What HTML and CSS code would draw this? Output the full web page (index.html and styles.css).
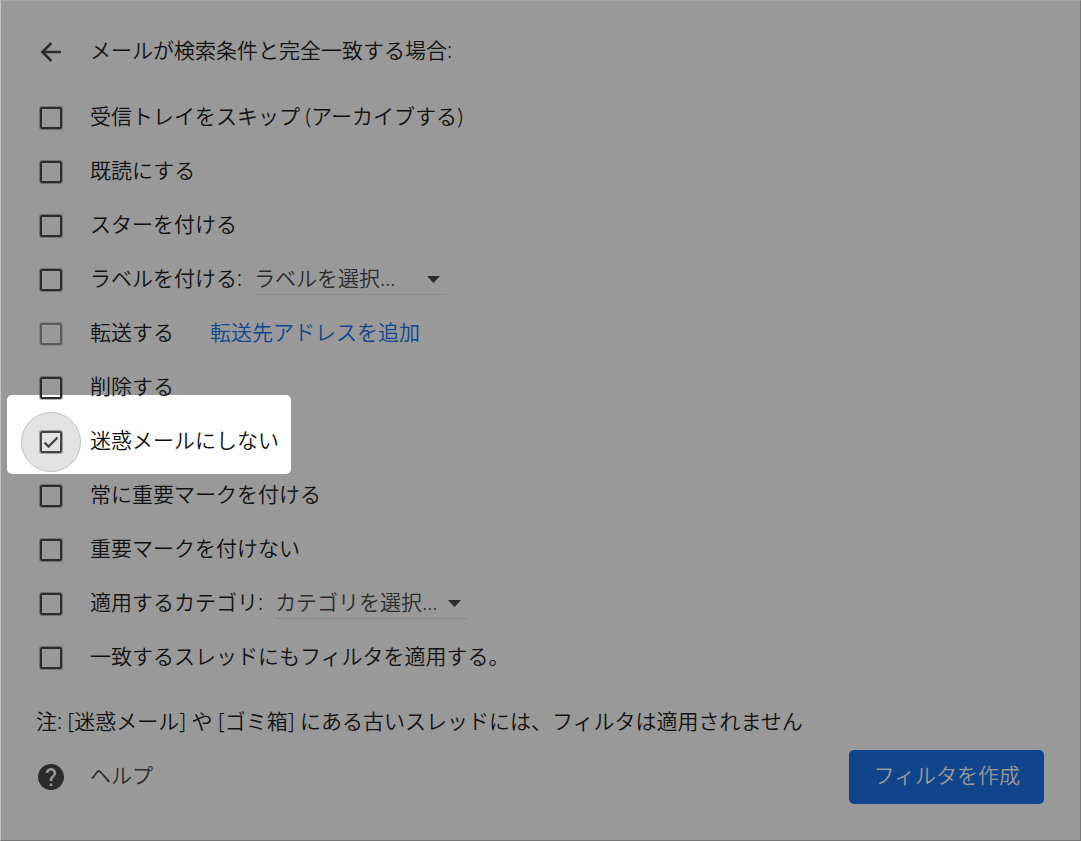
FILE: index.html
```
<!DOCTYPE html>
<html lang="ja">
<head>
  <meta charset="UTF-8" />
  <meta name="viewport" content="width=device-width, initial-scale=1.0"/>
  <title>フィルタを作成</title>
  <link rel="stylesheet" href="styles.css">
</head>
<body>

  <form class="panel">
    <header class="row header">
      <button type="button" class="back" aria-label="戻る">
        <svg viewBox="0 0 24 24" width="24" height="24" fill="none" stroke="currentColor" stroke-width="2.5">
          <path d="M22 12H4M12.4 3L3.400 12l9 9"/>
        </svg>
      </button>
      <span class="text">メールが検索条件と完全一致する場合:</span>
    </header>

    <div class="options">
      <div class="row">
        <span class="box"><input type="checkbox" id="skip"></span>
        <label class="text" for="skip">受信トレイをスキップ (アーカイブする)</label>
      </div>
      <div class="row">
        <span class="box"><input type="checkbox" id="read"></span>
        <label class="text" for="read">既読にする</label>
      </div>
      <div class="row">
        <span class="box"><input type="checkbox" id="star"></span>
        <label class="text" for="star">スターを付ける</label>
      </div>
      <div class="row">
        <span class="box"><input type="checkbox" id="label"></span>
        <label class="text" for="label">ラベルを付ける:</label>
        <span class="dropdown">
          <select aria-label="ラベルを選択">
            <option>ラベルを選択...</option>
          </select>
          <svg class="arrow" viewBox="0 0 13 7" width="13" height="7"><path d="M0 0h13L6.500 7z" fill="currentColor"/></svg>
        </span>
      </div>
      <div class="row">
        <span class="box"><input type="checkbox" id="forward" disabled></span>
        <label class="text" for="forward">転送する</label>
        <a href="#" class="text link">転送先アドレスを追加</a>
      </div>
      <div class="row">
        <span class="box"><input type="checkbox" id="delete"></span>
        <label class="text" for="delete">削除する</label>
      </div>
      <div class="row highlight">
        <span class="box focused"><input type="checkbox" id="spam" checked><svg class="tick" viewBox="0 0 18 18" width="18" height="18" fill="none" stroke="currentColor" stroke-width="2.3"><path d="M2.500 9.500l4 4 9-9"/></svg></span>
        <label class="text" for="spam">迷惑メールにしない</label>
      </div>
      <div class="row">
        <span class="box"><input type="checkbox" id="important"></span>
        <label class="text" for="important">常に重要マークを付ける</label>
      </div>
      <div class="row">
        <span class="box"><input type="checkbox" id="unimportant"></span>
        <label class="text" for="unimportant">重要マークを付けない</label>
      </div>
      <div class="row">
        <span class="box"><input type="checkbox" id="category"></span>
        <label class="text" for="category">適用するカテゴリ:</label>
        <span class="dropdown">
          <select aria-label="カテゴリを選択">
            <option>カテゴリを選択...</option>
          </select>
          <svg class="arrow" viewBox="0 0 13 7" width="13" height="7"><path d="M0 0h13L6.500 7z" fill="currentColor"/></svg>
        </span>
      </div>
      <div class="row">
        <span class="box"><input type="checkbox" id="threads"></span>
        <label class="text" for="threads">一致するスレッドにもフィルタを適用する。</label>
      </div>
    </div>

    <p class="note">注: [迷惑メール] や [ゴミ箱] にある古いスレッドには、フィルタは適用されません</p>

    <footer class="footer">
      <a href="#" class="row help">
        <span class="box">
          <svg viewBox="2 2 20 20" width="26" height="26" fill="currentColor">
            <path d="M12 2C6.480 2 2 6.480 2 12s4.480 10 10 10 10-4.480 10-10S17.520 2 12 2zm1 17h-2v-2h2v2zm2.070-7.750l-.9.920C13.450 12.900 13 13.500 13 15h-2v-.5c0-1.100.450-2.100 1.170-2.830l1.240-1.260c.370-.360.590-.860.590-1.410 0-1.100-.9-2-2-2s-2 .9-2 2H8c0-2.210 1.790-4 4-4s4 1.790 4 4c0 .880-.360 1.680-.930 2.250z"/>
          </svg>
        </span>
        <span class="text">ヘルプ</span>
      </a>
      <button type="submit" class="create">フィルタを作成</button>
    </footer>
  </form>

</body>
</html>
```
FILE: styles.css
```
* {
  box-sizing: border-box;
}

body {
  margin: 0;
  font-family: "Noto Sans", "Noto Sans CJK JP", sans-serif;
  font-size: 21px;
  font-weight: 350;
  color: #111;
  background-color: #999;
}

button,
select {
  font: inherit;
}

.panel {
  position: relative;
  z-index: 0;
  min-height: 100vh;
  padding: 24px 36px 36px 20px;
  border: 1px solid #777;
  border-top-color: #a6a6a6;
  border-left-color: #c4c4c4;
}

.row {
  display: flex;
  align-items: center;
  height: 54px;
  line-height: 32px;
  white-space: nowrap;
}

.text {
  padding-bottom: 4px;
}

.header {
  margin-bottom: 12px;
}

.back,
.box {
  flex: none;
  display: grid;
  place-items: center;
  width: 60px;
  height: 60px;
  margin-right: 9px;
  color: #2c2c2c;
}

.back {
  padding: 0;
  border: none;
  background: none;
  cursor: pointer;
}

.box > * {
  grid-area: 1 / 1;
}

.box input {
  appearance: none;
  width: 22px;
  height: 22px;
  margin: 0;
  border: 2px solid #2c2c2c;
  border-radius: 2px;
  box-shadow: 0 0 0 1px rgba(44, 44, 44, 0.35);
}

.box input:disabled {
  border-color: #5c5c5c;
  box-shadow: 0 0 0 1px rgba(44, 44, 44, 0.2);
}

/* active option: white card behind the row, round halo behind the box */
.highlight {
  position: relative;
}

.highlight::before {
  content: "";
  position: absolute;
  z-index: -1;
  top: -20px;
  left: -14px;
  width: 284px;
  height: 79px;
  border-radius: 5px;
  background: #fff;
}

.focused {
  border: 1px solid #bdc1c6;
  border-radius: 50%;
  background: #e3e3e3;
}

.box.focused input {
  border-color: #444;
}

.tick {
  color: #444;
  pointer-events: none;
}

.dropdown {
  display: grid;
  align-items: center;
  width: 192px;
  margin-left: 12px;
  border-bottom: 1px solid #8c8c8c;
}

.dropdown > * {
  grid-area: 1 / 1;
}

.dropdown select {
  appearance: none;
  width: 100%;
  height: 29px;
  padding: 0 0 3px;
  border: none;
  background: none;
  color: #2c2c2c;
  line-height: 21px;
}

.arrow {
  justify-self: end;
  margin-right: 6px;
  color: #2c2c2c;
  pointer-events: none;
}

.link {
  margin-left: 36px;
  color: #10458f;
  text-decoration: none;
}

.note {
  margin: 9px 0 1px 15px;
  line-height: 55px;
}

.footer {
  display: flex;
  justify-content: space-between;
  align-items: center;
}

.help {
  color: #2c2c2c;
  text-decoration: none;
}

.create {
  height: 54px;
  padding: 0 24px 7px;
  border: none;
  border-radius: 5px;
  background: #10458c;
  color: #999;
  cursor: pointer;
}
```
